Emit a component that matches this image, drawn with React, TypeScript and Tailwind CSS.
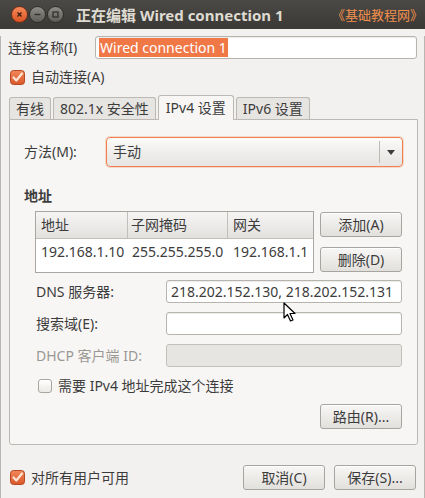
import React from "react";

const font = "font-['Noto_Sans','Noto_Sans_CJK_SC',sans-serif]";

function Check({ checked }: { checked?: boolean }) {
  if (!checked)
    return (
      <span className="inline-block h-[14px] w-[14px] shrink-0 rounded-[3px] border border-[#a9a59f] bg-gradient-to-b from-white to-[#eceae6]" />
    );
  return (
    <svg width="15" height="15" viewBox="0 0 15 15" className="shrink-0">
      <defs>
        <linearGradient id="cb" x1="0" y1="0" x2="0" y2="1">
          <stop offset="0" stopColor="#f2875a" />
          <stop offset="1" stopColor="#d9582a" />
        </linearGradient>
      </defs>
      <rect x="0.5" y="0.5" width="14" height="14" rx="3" fill="url(#cb)" stroke="#b54a22" />
      <path d="M3.5 7.5 L6.3 10.5 L12 3.5" fill="none" stroke="#fbe3d6" strokeWidth="2.2" strokeLinecap="round" strokeLinejoin="round" />
    </svg>
  );
}

function Btn({ children, className = "" }: { children: React.ReactNode; className?: string }) {
  return (
    <div
      className={`flex h-[25px] w-[82px] items-center justify-center rounded-[3px] border border-[#a8a5a0] bg-gradient-to-b from-[#f8f7f6] to-[#e2e0dc] text-[14px] text-[#3c3c3c] shadow-[inset_0_1px_0_#ffffff] ${className}`}
    >
      {children}
    </div>
  );
}

function Input({ value, disabled }: { value?: string; disabled?: boolean }) {
  return (
    <div
      className={`flex h-[23px] w-[236px] items-center rounded-[3px] border px-[4px] text-[14px] text-[#3c3c3c] ${
        disabled ? "border-[#c4c1bc] bg-[#e6e5e2]" : "border-[#b7b4ae] bg-white shadow-[inset_0_1px_1px_rgba(0,0,0,0.08)]"
      }`}
    >
      {value}
    </div>
  );
}

function WinBtn({ kind }: { kind: "close" | "min" | "max" }) {
  const close = kind === "close";
  return (
    <div
      className={`flex h-[17px] w-[17px] items-center justify-center rounded-full border ${
        close
          ? "border-[#6b2e18] bg-gradient-to-b from-[#f7895a] to-[#d9531f]"
          : "border-[#2e2d2a] bg-gradient-to-b from-[#8f8d87] to-[#5f5d58]"
      }`}
    >
      <svg width="9" height="9" viewBox="0 0 9 9">
        {close && <path d="M2.5 2.5 L6.5 6.5 M6.5 2.5 L2.5 6.5" stroke="#3a1d10" strokeWidth="1.4" />}
        {kind === "min" && <path d="M1.5 4.5 H7.5" stroke="#33322e" strokeWidth="1.4" />}
        {kind === "max" && <rect x="2" y="2" width="5" height="5" fill="none" stroke="#33322e" strokeWidth="1.3" />}
      </svg>
    </div>
  );
}

export default function App() {
  return (
    <div className={`relative h-[498px] w-[425px] overflow-hidden bg-[#f3f1ef] leading-[18px] ${font}`}>
      {/* Title bar */}
      <div className="flex h-[29px] items-center bg-gradient-to-b from-[#4a4945] to-[#3a3935] pl-[11px] pr-[2px]">
        <div className="flex gap-[1px]">
          <WinBtn kind="close" />
          <WinBtn kind="min" />
          <WinBtn kind="max" />
        </div>
        <div className="ml-[12px] text-[15px] font-bold text-[#dfdbd2]">正在编辑 Wired connection 1</div>
        <div className="ml-auto text-[13px] text-[#f2904e]">《基础教程网》</div>
      </div>

      <div className="h-[469px] border-x border-b border-[#b9b6b1] px-[7px]">
        {/* Name */}
        <div className="mt-[7px] flex h-[23px] items-center">
          <span className="w-[87px] text-[14px] text-[#3c3c3c]">连接名称(I)</span>
          <div className="flex h-[23px] flex-1 items-center rounded-[3px] border border-[#b7b4ae] bg-white px-[3px] shadow-[inset_0_1px_1px_rgba(0,0,0,0.08)]">
            <span className="bg-[#f07746] px-[1px] text-[14px] leading-[19px] text-white">Wired connection 1</span>
          </div>
        </div>

        {/* Auto connect */}
        <div className="mt-[9px] flex h-[18px] items-center gap-[6px] pl-[2px] text-[14px] text-[#3c3c3c]">
          <Check checked />
          <span>自动连接(A)</span>
        </div>

        {/* Tabs */}
        <div className="mt-[9px] flex items-end gap-[2px] pl-[1px]">
          {["有线", "802.1x 安全性"].map((t) => (
            <div
              key={t}
              className="flex h-[22px] items-center rounded-t-[3px] border border-b-0 border-[#bcb9b4] bg-[#e7e5e2] px-[6px] text-[14px] text-[#3c3c3c]"
            >
              {t}
            </div>
          ))}
          <div className="relative z-10 -mb-px flex h-[25px] items-center rounded-t-[3px] border border-b-0 border-[#bcb9b4] bg-[#f8f6f4] px-[7px] text-[14px] text-[#3c3c3c]">
            IPv4 设置
          </div>
          <div className="flex h-[22px] items-center rounded-t-[3px] border border-b-0 border-[#bcb9b4] bg-[#e7e5e2] px-[6px] text-[14px] text-[#3c3c3c]">
            IPv6 设置
          </div>
        </div>

        {/* Panel */}
        <div className="ml-[1px] h-[326px] w-[409px] rounded-b-[3px] border border-[#bcb9b4] bg-[#f8f6f4] text-[14px] text-[#3c3c3c]">
          {/* Method */}
          <div className="mt-[17px] flex items-center pl-[14px]">
            <span className="w-[82px]">方法(M):</span>
            <div className="flex h-[30px] w-[297px] items-center rounded-[4px] border border-[#f08050] bg-gradient-to-b from-[#fbfbfa] via-[#efeeec] to-[#e6e5e2] shadow-[0_0_0_1px_rgba(240,128,80,0.25)]">
              <span className="flex-1 pl-[6px]">手动</span>
              <div className="h-[22px] w-px bg-[#bdbab5]" />
              <svg width="22" height="10" viewBox="0 0 22 10">
                <path d="M7 3 H15 L11 8 Z" fill="#3c3c3c" />
              </svg>
            </div>
          </div>

          <div className="mt-[20px] pl-[14px] font-bold">地址</div>

          {/* Address table + buttons */}
          <div className="mt-[6px] flex pl-[25px]">
            <div className="h-[62px] w-[279px] border border-[#a9a6a1] bg-white">
              <div className="flex h-[27px] border-b border-[#c2bfba] bg-gradient-to-b from-[#f6f5f4] to-[#e3e1de]">
                <div className="flex w-[92px] items-center border-r border-[#c2bfba] pl-[5px]">地址</div>
                <div className="flex w-[100px] items-center border-r border-[#c2bfba] pl-[3px]">子网掩码</div>
                <div className="flex flex-1 items-center pl-[5px]">网关</div>
              </div>
              <div className="flex h-[26px] items-center">
                <div className="w-[92px] pl-[5px]">192.168.1.10</div>
                <div className="w-[100px] pl-[4px]">255.255.255.0</div>
                <div className="flex-1 pl-[5px]">192.168.1.1</div>
              </div>
            </div>
            <div className="ml-[6px] flex flex-col gap-[10px] pt-[1px]">
              <Btn>添加(A)</Btn>
              <Btn>删除(D)</Btn>
            </div>
          </div>

          {/* Fields */}
          <div className="mt-[7px] flex flex-col gap-[9px] pl-[26px]">
            <div className="flex items-center">
              <span className="w-[130px]">DNS 服务器:</span>
              <Input value="218.202.152.130, 218.202.152.131" />
            </div>
            <div className="flex items-center">
              <span className="w-[130px]">搜索域(E):</span>
              <Input />
            </div>
            <div className="flex items-center">
              <span className="w-[130px] text-[#9a9893]">DHCP 客户端 ID:</span>
              <Input disabled />
            </div>
          </div>

          <div className="mt-[10px] flex h-[18px] items-center gap-[6px] pl-[28px]">
            <Check />
            <span>需要 IPv4 地址完成这个连接</span>
          </div>

          <div className="mt-[9px] flex justify-end pr-[15px]">
            <Btn>路由(R)...</Btn>
          </div>
        </div>

        {/* Bottom */}
        <div className="mt-[20px] flex items-center text-[14px] text-[#3c3c3c]">
          <div className="flex items-center gap-[6px] pl-[2px]">
            <Check checked />
            <span>对所有用户可用</span>
          </div>
          <div className="ml-auto flex gap-[9px] pr-[1px]">
            <Btn>取消(C)</Btn>
            <Btn>保存(S)...</Btn>
          </div>
        </div>
      </div>

      {/* Mouse pointer */}
      <svg className="absolute left-[283px] top-[302px]" width="14" height="21" viewBox="0 0 14 21">
        <path d="M1 1 L1 16 L4.5 12.5 L7.5 19 L10 18 L7 11.5 L12 11.5 Z" fill="#ffffff" stroke="#000000" strokeWidth="1.2" strokeLinejoin="round" />
      </svg>
    </div>
  );
}
